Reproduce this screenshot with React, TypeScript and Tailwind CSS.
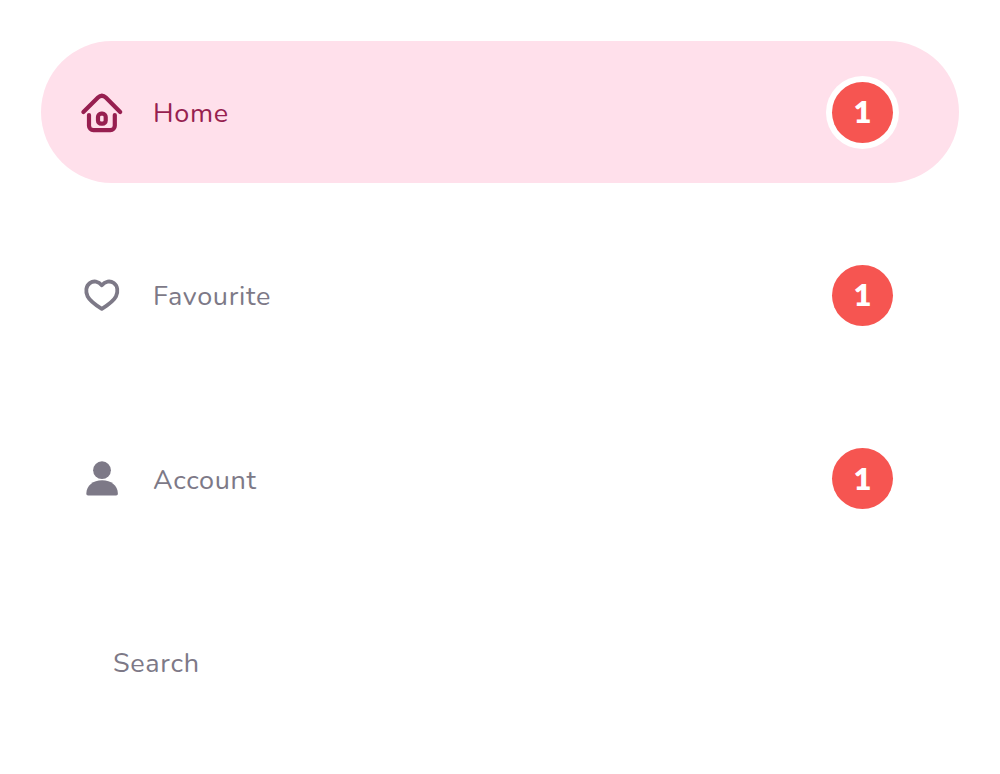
import type { ReactNode } from "react";

type Item = {
  label: string;
  icon?: ReactNode;
  count?: number;
  active?: boolean;
};

function HomeIcon() {
  return (
    <svg viewBox="0 0 44 44" className="size-11 shrink-0" fill="none" stroke="currentColor" strokeWidth="4.2" strokeLinecap="round" strokeLinejoin="round" aria-hidden="true">
      <path d="M3.4 22 18 7.6Q21.900 3.700 25.800 7.600L40.200 22" />
      <path d="M9 25V35.700a4.400 4.400 0 0 0 4.400 4.400h17a4.400 4.400 0 0 0 4.400-4.400V25" />
      <rect x="18" y="23.700" width="7.700" height="10" rx="3.200" />
    </svg>
  );
}

function HeartIcon() {
  return (
    <svg viewBox="0 0 44 44" className="size-11 shrink-0" fill="none" stroke="currentColor" strokeWidth="3.8" strokeLinejoin="round" aria-hidden="true">
      <path d="M21.800 12.200C18.500 8.200 13.500 7.400 9.800 10.100 5.900 13 5.300 18.600 7.600 23.400 10 28.300 15.600 32 21.800 35.900 28 32 33.600 28.300 36 23.400 38.300 18.600 37.700 13 33.800 10.100 30.100 7.400 25.100 8.200 21.800 12.200Z" />
    </svg>
  );
}

function AccountIcon() {
  return (
    <svg viewBox="0 0 44 44" className="size-11 shrink-0" fill="currentColor" aria-hidden="true">
      <circle cx="22" cy="13.200" r="8.900" />
      <path d="M6.300 36.400C6.600 28.600 13 23.300 22.100 23.300s15.500 5.300 15.800 13.100c0 1.300-.6 2-1.800 2H8.100c-1.200 0-1.800-.7-1.800-2Z" />
    </svg>
  );
}

const items: Item[] = [
  { label: "Home", icon: <HomeIcon />, count: 1, active: true },
  { label: "Favourite", icon: <HeartIcon />, count: 1 },
  { label: "Account", icon: <AccountIcon />, count: 1 },
  { label: "Search" },
];

export default function App() {
  return (
    <nav aria-label="Main" className="grid min-h-screen auto-rows-fr gap-[41px] bg-white p-[41px] font-['Nunito','Lato',sans-serif]">
      {items.map(({ label, icon, count, active }) => (
        <a
          key={label}
          href={`#${label.toLowerCase()}`}
          aria-current={active ? "page" : undefined}
          className={`flex min-h-32 items-center rounded-full pr-[66px] pl-[39px] ${
            active ? "bg-[#ffe0eb] text-[#971f50]" : "text-[#7d7987]"
          }`}
        >
          {icon}
          <span className="ml-[29px] flex-1 pt-1 text-[27px] leading-9 tracking-wide first:pl-1">{label}</span>
          {count !== undefined && (
            <span
              className={`grid size-[61px] place-items-center rounded-full bg-[#f65551] pb-0.5 font-['Lato',sans-serif] text-[31px] leading-9 font-extrabold text-white ${
                active ? "ring-[6px] ring-white" : ""
              }`}
            >
              {count}
            </span>
          )}
        </a>
      ))}
    </nav>
  );
}
